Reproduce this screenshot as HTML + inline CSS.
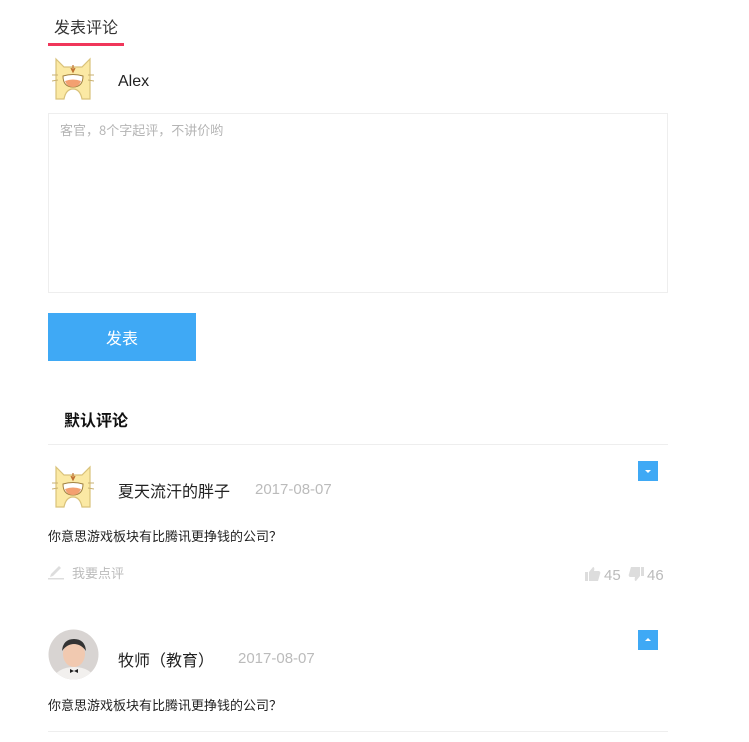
<!DOCTYPE html>
<html><head><meta charset="utf-8"><style>
body{margin:0;background:#fff;font-family:"Liberation Sans","Noto Sans CJK SC",sans-serif;width:749px;height:742px;position:relative;overflow:hidden;color:#222}
.a{position:absolute;white-space:nowrap}
.cj{font-family:"Noto Sans CJK SC",sans-serif}
.q{font-family:"WenQuanYi Zen Hei",sans-serif}
</style></head><body>
<svg width="0" height="0" style="position:absolute"><defs>
<g id="cat">
<path d="M4 4 L12 12 L30 12 L38 4 L38 44 L30 44 Q28 34 21 34 Q14 34 12 44 L4 44 Z" fill="#fbe9a4" stroke="#d9c27a" stroke-width="1.2"/>
<path d="M0 20 L6 20 M0 26 L6 25 M36 20 L42 20 M36 25 L42 26" stroke="#c9b070" stroke-width="1"/>
<path d="M11 21 Q21 18 31 21 Q31 32 21 32 Q11 32 11 21 Z" fill="#fff" stroke="#a08040" stroke-width="1"/>
<path d="M13 26 Q21 23 29 26 Q27 32 21 32 Q15 32 13 26Z" fill="#f3a070"/>
<path d="M19 13 L21 17 L23 13 M21 10 L21 17" stroke="#c07030" stroke-width="1.2" fill="none"/>
</g></defs></svg>

<div class="a" style="left:54px;top:14px;font-size:16px;color:#333">发表评论</div>
<div class="a" style="left:48px;top:43px;width:76px;height:3px;background:#f0365a"></div>
<svg class="a" style="left:52px;top:55px" width="42" height="46"><use href="#cat"/></svg>
<div class="a" style="left:118px;top:73px;font-size:16px;color:#222">Alex</div>
<div class="a" style="left:48px;top:113px;width:618px;height:178px;border:1px solid #eee"></div>
<div class="a cj" style="left:60px;top:120px;font-size:13px;color:#b5b5b5">客官<span class="q">，</span>8个字起评<span class="q">，</span>不讲价哟</div>
<div class="a" style="left:48px;top:313px;width:148px;height:48px;background:#3fa9f5;color:#fff;font-size:16px;text-align:center;line-height:54px">发表</div>
<div class="a" style="left:64px;top:407px;font-size:16px;font-weight:bold;color:#111">默认评论</div>
<div class="a" style="left:48px;top:444px;width:620px;height:1px;background:#eee"></div>

<svg class="a" style="left:52px;top:463px" width="42" height="46"><use href="#cat"/></svg>
<div class="a" style="left:118px;top:478px;font-size:16px;color:#222">夏天流汗的胖子</div>
<div class="a" style="left:255px;top:481px;font-size:15px;color:#bbb">2017-08-07</div>
<div class="a" style="left:638px;top:461px;width:20px;height:20px;background:#3fa9f5"><svg width="20" height="20"><path d="M7 9 L13 9 L10 12Z" fill="#fff"/></svg></div>
<div class="a cj" style="left:48px;top:526px;font-size:13px;color:#222">你意思游戏板块有比腾讯更挣钱的公司<span class="q">？</span></div>
<svg class="a" style="left:48px;top:564px" width="18" height="16"><path d="M2 13 L3 10 L11 2 L13 4 L5 12Z" fill="#ddd"/><rect x="0" y="14" width="16" height="1.5" fill="#ddd"/></svg>
<div class="a" style="left:72px;top:563px;font-size:13px;color:#bbb">我要点评</div>
<svg class="a" style="left:584px;top:566px" width="18" height="16"><rect x="1" y="6" width="3" height="9" fill="#ddd"/><path d="M5 6 L9 1 Q11 1 10 5 L15 5 Q17 6 16 8 L14 15 L5 15Z" fill="#ddd"/></svg>
<div class="a" style="left:604px;top:567px;font-size:15px;color:#bbb">45</div>
<svg class="a" style="left:627px;top:566px" width="18" height="16"><rect x="14" y="1" width="3" height="9" fill="#ddd"/><path d="M13 10 L9 15 Q7 15 8 11 L3 11 Q1 10 2 8 L4 1 L13 1Z" fill="#ddd"/></svg>
<div class="a" style="left:647px;top:567px;font-size:15px;color:#bbb">46</div>

<svg class="a" style="left:48px;top:629px" width="51" height="51"><defs><clipPath id="c"><circle cx="25.5" cy="25.5" r="25"/></clipPath></defs><g clip-path="url(#c)"><rect width="51" height="51" fill="#d8d4d2"/><ellipse cx="26" cy="50" rx="20" ry="12" fill="#f2f0ee"/><ellipse cx="26" cy="25" rx="11" ry="13" fill="#f1c9b0"/><path d="M14 22 Q15 10 26 10 Q37 10 38 22 Q33 15 26 15 Q19 15 14 22Z" fill="#333"/><path d="M22 40 L26 42 L30 40 L30 44 L26 42 L22 44Z" fill="#222"/></g></svg>
<div class="a" style="left:118px;top:647px;font-size:16px;color:#222">牧师（教育）</div>
<div class="a" style="left:238px;top:650px;font-size:15px;color:#bbb">2017-08-07</div>
<div class="a" style="left:638px;top:630px;width:20px;height:20px;background:#3fa9f5"><svg width="20" height="20"><path d="M7 11 L13 11 L10 8Z" fill="#fff"/></svg></div>
<div class="a cj" style="left:48px;top:695px;font-size:13px;color:#222">你意思游戏板块有比腾讯更挣钱的公司<span class="q">？</span></div>
<div class="a" style="left:48px;top:731px;width:620px;height:1px;background:#eee"></div>
</body></html>
